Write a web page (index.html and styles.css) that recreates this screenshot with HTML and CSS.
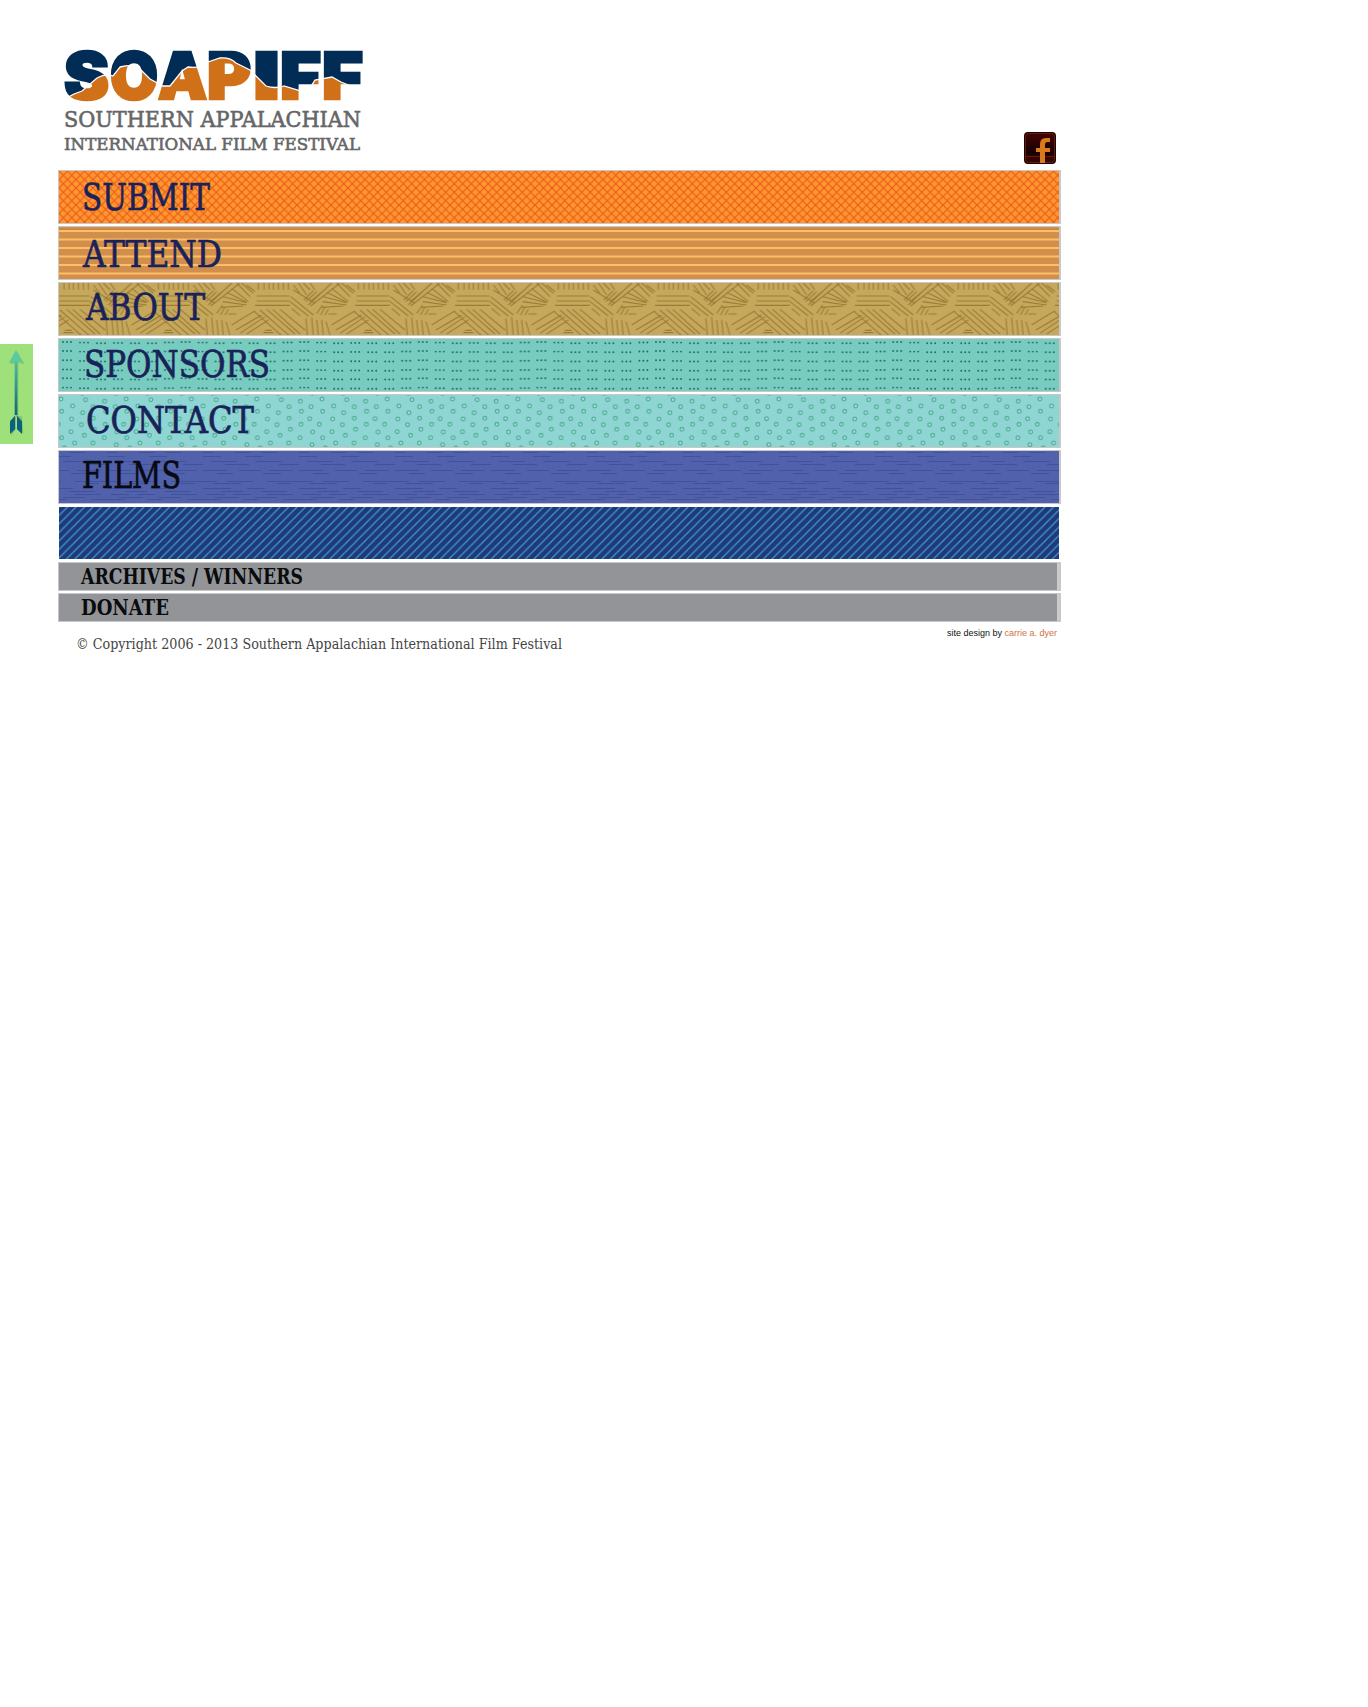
FILE: index.html
```html
<!DOCTYPE html>
<html lang="en">
<head>
<meta charset="utf-8">
<title>Southern Appalachian International Film Festival</title>
<link rel="stylesheet" href="styles.css">
</head>
<body>
<a class="side-tab" href="#top" aria-label="Back to top">
  <svg width="33" height="100" viewBox="0 0 99 300">
    <defs><linearGradient id="arrow" gradientUnits="userSpaceOnUse" x1="0" y1="50" x2="0" y2="215"><stop offset="0" stop-color="#50bd9e"/><stop offset=".5" stop-color="#2e9293"/><stop offset="1" stop-color="#0b6280"/></linearGradient></defs>
    <path d="M30 61L51 23 74 61 55 55V217H66L70 269 53 255V219H48V255L34 275V237L47 217V57Z" fill="#4c8a42" opacity=".35"/>
    <path d="M48 18L70 57 53 51H43L26 57Z" fill="#59caa3"/>
    <path d="M44 52H52V213H44Z" fill="url(#arrow)"/>
    <path d="M45 215V256L30 270V232ZM51 215V256L66 270V232Z" fill="#0b6280"/>
  </svg>
</a>
<main class="page" id="top">
  <header class="header">
    <svg class="logo" width="310" height="112" viewBox="0 0 310 112">
      <defs>
        <pattern id="ridge" patternUnits="userSpaceOnUse" width="310" height="70">
          <rect width="310" height="70" fill="#002c55"/>
          <path d="M-2 56Q8 56 16 51L24 48 39 35Q48 30 55 33L62 24Q78 20 83 27L92 36 105 43 112 43 124 28 130 24Q142 26 150 19L162 15Q172 14 178 20L192 27 208 43Q217 46 226 43L243 48Q252 47 257 37L274 34 283 39 295 44V70H-2Z" fill="#d07119" stroke="#fff" stroke-width="1.3"/>
        </pattern>
      </defs>
      <g class="logo-word">
        <text y="55.5"><tspan x="6" textLength="45" lengthAdjust="spacingAndGlyphs">S</tspan><tspan x="52" textLength="48" lengthAdjust="spacingAndGlyphs">O</tspan><tspan x="100" textLength="49" lengthAdjust="spacingAndGlyphs">A</tspan><tspan x="149" textLength="44" lengthAdjust="spacingAndGlyphs">P</tspan><tspan x="195" textLength="27" lengthAdjust="spacingAndGlyphs">I</tspan><tspan x="222" textLength="41" lengthAdjust="spacingAndGlyphs">F</tspan><tspan x="264" textLength="41" lengthAdjust="spacingAndGlyphs">F</tspan></text>
      </g>
      <g class="slab">
        <text x="6" y="84" font-size="22" textLength="297" lengthAdjust="spacingAndGlyphs">SOUTHERN APPALACHIAN</text>
        <text x="6" y="107" font-size="17" textLength="296" lengthAdjust="spacingAndGlyphs">INTERNATIONAL FILM FESTIVAL</text>
      </g>
    </svg>
    <a class="facebook" href="#" aria-label="Facebook">
      <svg width="32" height="32" viewBox="0 0 32 32">
        <defs><linearGradient id="fb" x1="0" y1="0" x2="0" y2="1"><stop offset="0" stop-color="#430503"/><stop offset=".65" stop-color="#160000"/><stop offset=".8" stop-color="#330301"/><stop offset="1" stop-color="#3a0702"/></linearGradient></defs>
        <rect width="32" height="32" rx="4" fill="#240000"/>
        <rect x="1.5" y="1.5" width="29" height="29" rx="3" fill="url(#fb)" stroke="#5c200e"/>
        <path d="M1 24.5H31" stroke="#651b07"/>
        <path d="M16 31V20H12V16H16V12Q16 6 22 6H26V10H23Q21 10 21 12.500V16H26V20H21V31Z" fill="#d97a1d"/>
      </svg>
    </a>
  </header>

  <nav class="menu">
    <a class="bar" href="#"><svg width="1000" height="52">
      <defs><pattern id="lattice" patternUnits="userSpaceOnUse" width="8.5" height="8.5"><rect width="9" height="9" fill="#ff962e"/><path d="M-1-1L9.500 9.500M9.500-1L-1 9.500" stroke="#e95a1c" stroke-width="1.150"/></pattern></defs>
      <rect width="1000" height="52" fill="url(#lattice)"/>
      <text class="label" x="23" y="38.500" textLength="128" lengthAdjust="spacingAndGlyphs">SUBMIT</text></svg></a>

    <a class="bar" href="#"><svg width="1000" height="52">
      <rect width="1000" height="52" fill="#d18e4c"/>
      <path d="M0 4H1000M0 12.500H1000M0 21H1000M0 29.500H1000M0 38H1000M0 46.500H1000" stroke="#fdbf62" stroke-width="2"/>
      <path d="M0 2.200H1000" stroke="#c57d40"/>
      <text class="label" x="24" y="39.500" textLength="139" lengthAdjust="spacingAndGlyphs">ATTEND</text></svg></a>

    <a class="bar" href="#"><svg width="1000" height="52">
      <defs>
        <g id="straw" fill="none" stroke="#9c7c35" stroke-width="3.300">
          <path d="M17-4V20M34-4V20M49-4V20M62-4V20M77-4V20M92-4V20M107-4V20M12 39H110M12 54H112M7 67H112"/>
          <path d="M5 86L87 158M22 81L110 158M42 79L127 153M60 79L142 153M82 79L157 141M-63 126L7 83M-50 141L27 96M-38 151L37 101M-18 153L47 111M37 142H57M32 149H62"/>
          <path d="M112 56L167 99M114 41L182 96M117 76L142 98M122 21L187 61M160 106L164 158M177 103L182 158M192 111L197 158M207 111L212 158M220 116L232 158"/>
          <path d="M210 56L282 66M212 41L282 59M222 28L282 58M207 73L272 69M237 16L287 56M167 66L237 0M174 69L262 0M172 56L217 19M160 56L192 26M154 51L182 23"/>
          <path d="M122 6L142 31M137 0L162 36M152 0L172 21M172 0L187 21M192 91L210 66M204 96L217 71M217 96L227 79M227 93H252M252 0L292 41M267 0L302 31M282 6L307 26"/>
        </g>
        <pattern id="thatch" patternUnits="userSpaceOnUse" width="300" height="156" patternTransform="translate(-6.300) scale(.3333)"><rect width="300" height="156" fill="#c6a85c"/><use href="#straw"/><use href="#straw" x="300"/><use href="#straw" x="-300"/></pattern>
      </defs>
      <rect width="1000" height="52" fill="url(#thatch)"/>
      <text class="label" x="27" y="37" textLength="119" lengthAdjust="spacingAndGlyphs">ABOUT</text></svg></a>

    <a class="bar" href="#"><svg width="1000" height="52">
      <defs>
        <path id="trio" d="M0 3h0m4 0h0m4 0h0M0 12h0m4 0h0m4 0h0M0 21.300h0m4 0h0m4 0h0M0 30.500h0m4 0h0m4 0h0M0 39.300h0m4 0h0m4 0h0M0 48.600h0m4 0h0m4 0h0"/>
        <pattern id="dots" patternUnits="userSpaceOnUse" x="2" width="118.600" height="52"><rect width="119" height="52" fill="#78cbbf"/><g stroke="#176f66" stroke-width="1.900" stroke-linecap="round"><use href="#trio" x="2"/><use href="#trio" x="19" y=".6"/><use href="#trio" x="36" y="1.200"/><use href="#trio" x="53" y=".9"/><use href="#trio" x="70" y="1.200"/><use href="#trio" x="87" y="1.200"/><use href="#trio" x="104" y=".5"/></g></pattern>
      </defs>
      <rect width="1000" height="52" fill="url(#dots)"/>
      <text class="label" x="25" y="37.500" textLength="186" lengthAdjust="spacingAndGlyphs">SPONSORS</text></svg></a>

    <a class="bar" href="#"><svg width="1000" height="52">
      <defs>
        <g id="rings" fill="#a2ded6" stroke="#53b39b" stroke-width="3.900">
          <circle cx="12" cy="12" r="5.500"/><circle cx="86" cy="14" r="5.500"/><circle cx="143" cy="19" r="5.500"/><circle cx="47" cy="33" r="5.500"/><circle cx="175" cy="35" r="5.500"/><circle cx="109" cy="35" r="5.500"/><circle cx="14" cy="49" r="5.500"/><circle cx="77" cy="53" r="5.500"/><circle cx="146" cy="49" r="5.500"/><circle cx="44" cy="72" r="5.500"/><circle cx="109" cy="70" r="5.500"/><circle cx="171" cy="71" r="5.500"/><circle cx="4" cy="88" r="5.500"/><circle cx="200" cy="88" r="5.500"/><circle cx="73" cy="89" r="5.500"/><circle cx="145" cy="88" r="5.500"/><circle cx="113" cy="103" r="5.500"/><circle cx="42" cy="110" r="5.500"/><circle cx="180" cy="111" r="5.500"/><circle cx="82" cy="121" r="5.500"/><circle cx="14" cy="128" r="5.500"/><circle cx="142" cy="128" r="5.500"/><circle cx="53" cy="144" r="5.500"/><circle cx="108" cy="144" r="5.500"/><circle cx="178" cy="149" r="5.500"/><circle cx="22" cy="159" r="5.500"/><circle cx="75" cy="-5" r="5.500"/><circle cx="178" cy="-5" r="5.500"/>
        </g>
        <pattern id="bubbles" patternUnits="userSpaceOnUse" width="195.800" height="156" patternTransform="translate(-2) scale(.3333)"><rect width="196" height="156" fill="#8fd5d3"/><use href="#rings"/></pattern>
      </defs>
      <rect width="1000" height="52" fill="url(#bubbles)"/>
      <text class="label" x="27" y="37.500" textLength="168" lengthAdjust="spacingAndGlyphs">CONTACT</text></svg></a>

    <a class="bar" href="#"><svg width="1000" height="52">
      <defs><pattern id="grain" patternUnits="userSpaceOnUse" x="48" width="96" height="52"><rect width="96" height="52" fill="#5161ab"/>
        <path d="M0 1.500H10M32 1.500H48M58 1.500H74M0 5.500H18M42 5.500H60M8 10.500H34M52 10.500H79M22 13.500H46M76 13.500H96M0 19.500H24M36 19.500H58M66 19.500H90M14 22.500H30M60 22.500H78M0 30.500H14M24 30.500H50M64 30.500H96M10 32.500H38M74 32.500H88M0 37.500H28M44 37.500H62M18 40.500H40M58 40.500H84M4 43.500H22M30 43.500H48M64 43.500H90M12 46.500H36M52 46.500H74M0 48.500H18M40 48.500H56M80 48.500H96" stroke="#41529c"/></pattern></defs>
      <rect width="1000" height="52" fill="url(#grain)"/>
      <text class="label label-black" x="23" y="36.500" textLength="99" lengthAdjust="spacingAndGlyphs">FILMS</text></svg></a>

    <div class="bar bar-plain"><svg width="1000" height="52">
      <defs><pattern id="twill" patternUnits="userSpaceOnUse" width="8.500" height="8.500"><rect width="9" height="9" fill="#1f397c"/><path d="M-2 10.500L10.500-2M-2 2L2-2M6.500 10.500L10.500 6.500" stroke="#3d9cc6" stroke-width="1.250"/></pattern></defs>
      <rect width="1000" height="52" fill="url(#twill)"/></svg></div>

    <a class="bar bar-small" href="#"><svg width="998" height="27"><text x="22" y="21" textLength="222" lengthAdjust="spacingAndGlyphs">ARCHIVES / WINNERS</text></svg></a>
    <a class="bar bar-small" href="#"><svg width="998" height="27"><text x="22" y="21" textLength="88" lengthAdjust="spacingAndGlyphs">DONATE</text></svg></a>
  </nav>

  <footer class="footer">
    <svg class="copyright" width="500" height="28"><text x="1" y="21" textLength="486" lengthAdjust="spacingAndGlyphs">© Copyright 2006 - 2013 Southern Appalachian International Film Festival</text></svg>
    <p class="credit">site design by <a href="#">carrie a. dyer</a></p>
  </footer>
</main>
</body>
</html>
```
FILE: styles.css
```css
body {
  margin: 0;
  background: #fff;
  font-family: "Liberation Sans", Arial, sans-serif;
}

svg {
  display: block;
  overflow: visible;
}

.side-tab {
  position: absolute;
  left: 0;
  top: 344px;
  width: 33px;
  height: 100px;
  background: #9ee17a;
}

.page {
  width: 1003px;
  margin-left: 58px;
  padding-top: 43px;
}

.header {
  display: flex;
  justify-content: space-between;
  align-items: flex-end;
  height: 121px;
  padding-right: 5px;
  margin-bottom: 6px;
}

.logo { align-self: flex-start; }

.logo-word {
  font-family: Inter, sans-serif;
  font-weight: 900;
  font-size: 64px;
  fill: url(#ridge);
  stroke: url(#ridge);
  stroke-width: 2.6px;
}

.slab,
.label,
.bar-small,
.copyright {
  font-family: "DejaVu Serif", serif;
}

.slab {
  fill: #666;
  stroke: #666;
  stroke-width: .6px;
}

.menu {
  display: flex;
  flex-direction: column;
  gap: 2px;
}

.bar {
  display: block;
  height: 52px;
  border: 1px solid #c8c8c8;
  border-right-width: 2px;
  background: #ccc;
}

.label {
  font-size: 38px;
  fill: #19235a;
  stroke: #19235a;
  stroke-width: .7px;
}

.label-black {
  fill: #080a12;
  stroke: #080a12;
}

.bar-plain {
  border-color: transparent;
  background: none;
}

.bar-small {
  height: 27px;
  font-weight: bold;
  font-size: 22px;
  fill: #090b0d;
}

.bar-small svg { background: #939498; }

.footer {
  display: flex;
  justify-content: space-between;
  align-items: flex-start;
  padding: 6px 4px 0 17px;
}

.copyright {
  font-size: 15px;
  fill: #444;
}

.credit {
  margin: 0;
  font-size: 9px;
  line-height: 10px;
  color: #111;
}

.credit a {
  color: #d2713f;
  text-decoration: none;
}
```
